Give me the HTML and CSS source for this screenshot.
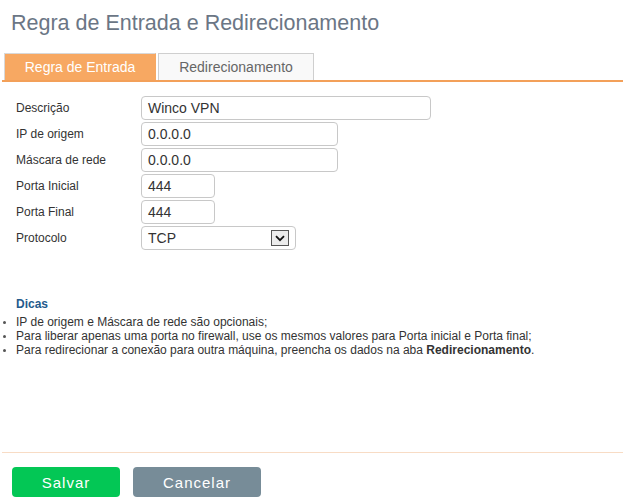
FILE: index.html
```html
<!DOCTYPE html>
<html lang="pt">
<head>
<meta charset="utf-8">
<title>Regra de Entrada e Redirecionamento</title>
<link rel="stylesheet" href="styles.css">
</head>
<body>
<h1 class="title">Regra de Entrada e Redirecionamento</h1>
<div class="tabs">
  <div class="tab tab-active">Regra de Entrada</div>
  <div class="tab">Redirecionamento</div>
</div>
<div class="form">
  <label class="label">Descrição</label>
  <div class="field field-long">Winco VPN</div>
  <label class="label">IP de origem</label>
  <div class="field field-mid">0.0.0.0</div>
  <label class="label">Máscara de rede</label>
  <div class="field field-mid">0.0.0.0</div>
  <label class="label">Porta Inicial</label>
  <div class="field field-short">444</div>
  <label class="label">Porta Final</label>
  <div class="field field-short">444</div>
  <label class="label">Protocolo</label>
  <div class="field field-select">
    <span class="select-value">TCP</span>
    <span class="select-arrow">
      <svg width="10" height="7" viewBox="0 0 10 7"><path d="M1 1.2 L5 5.2 L9 1.2" fill="none" stroke="#111" stroke-width="1.8"/></svg>
    </span>
  </div>
</div>
<div class="tips">
  <div class="tips-title">Dicas</div>
  <ul class="tips-list">
    <li>IP de origem e Máscara de rede são opcionais;</li>
    <li>Para liberar apenas uma porta no firewall, use os mesmos valores para Porta inicial e Porta final;</li>
    <li>Para redirecionar a conexão para outra máquina, preencha os dados na aba <b>Redirecionamento</b>.</li>
  </ul>
</div>
<div class="footer">
  <button class="btn btn-save">Salvar</button>
  <button class="btn btn-cancel">Cancelar</button>
</div>
</body>
</html>
```
FILE: styles.css
```css
* { box-sizing: border-box; }
body {
  margin: 0;
  background: #fff;
  font-family: "Liberation Sans", Arial, sans-serif;
  color: #333;
}
.title {
  margin: 0;
  padding: 8px 0 0 11px;
  font-size: 21.5px;
  line-height: 30px;
  font-weight: normal;
  color: #6b7685;
}
.tabs {
  display: flex;
  gap: 2px;
  margin: 15px 0 0 2px;
  padding-left: 2px;
  border-bottom: 2px solid #f3a059;
}
.tab {
  height: 27px;
  line-height: 26px;
  text-align: center;
  font-size: 14px;
  width: 156px;
  background: #f9f9f9;
  color: #666;
  border: 1px solid #cfcfcf;
  border-bottom: none;
}
.tab-active {
  width: 152px;
  background: #f7a862;
  color: #fff;
  border-color: #d8d8d8 #f7a862 #f7a862 #d8d8d8;
}
.form {
  display: grid;
  grid-template-columns: 125px auto;
  row-gap: 2px;
  margin-top: 14px;
  padding-left: 16px;
  justify-items: start;
  align-items: center;
}
.label {
  font-size: 12px;
  color: #333;
}
.field {
  height: 24px;
  border: 1px solid #c8c8c8;
  border-radius: 4px;
  padding-left: 6px;
  font-size: 14px;
  line-height: 22px;
  color: #333;
}
.field-long { width: 290px; }
.field-mid { width: 197px; }
.field-short { width: 74px; }
.field-select {
  width: 155px;
  height: 24px;
  display: flex;
  align-items: center;
  justify-content: space-between;
  padding-right: 6px;
}
.select-arrow {
  width: 18px;
  height: 16px;
  border: 1px solid #555;
  background: #ececec;
  display: flex;
  align-items: center;
  justify-content: center;
}
.tips {
  margin-top: 47px;
  font-size: 12px;
  line-height: 14px;
}
.tips-title {
  padding-left: 16px;
  font-weight: bold;
  color: #245a8c;
}
.tips-list {
  list-style: none;
  margin: 4px 0 0;
  padding: 0;
  color: #333;
}
.tips-list li {
  position: relative;
  padding-left: 16px;
}
.tips-list li::before {
  content: "";
  position: absolute;
  left: 3px;
  top: 6px;
  width: 3px;
  height: 3px;
  border-radius: 50%;
  background: #555;
}
.tips-list b { color: #333; }
.footer {
  margin: 95px 0 0 2px;
  border-top: 1px solid #f8dcc5;
  padding: 14px 0 0 10px;
  display: flex;
  gap: 13px;
}
.btn {
  height: 30px;
  border: none;
  border-radius: 4px;
  font-family: "Liberation Sans", Arial, sans-serif;
  font-size: 15px;
  letter-spacing: 1px;
  color: #fff;
  padding: 0;
}
.btn-save { width: 108px; background: #03c755; }
.btn-cancel { width: 128px; background: #778c98; }
```
